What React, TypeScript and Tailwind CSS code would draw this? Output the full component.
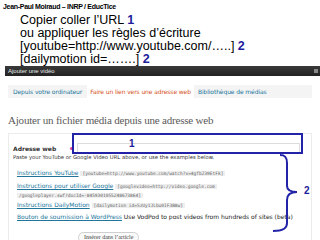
const navy = "text-[#1c1c9c]";

const Brace: React.FC = () => (
  <svg
    className="absolute left-[268px] top-[153px]"
    width="36"
    height="82"
    viewBox="0 0 36 82"
    fill="none"
  >
    <path
      d="M12 2 C17 2 19 4 19 10 L19 33 C19 37 22 39 29 39 C22 39 19 42 19 47 L19 70 C19 75 16 78 5 78"
      stroke="#2323a8"
      strokeWidth="2"
    />
  </svg>
);

const Code: React.FC<{ children: React.ReactNode }> = ({ children }) => (
  <code className="bg-[#eeeeee] px-[2px] font-['DejaVu_Sans_Mono',monospace] text-[4.5px] leading-none text-[#666]">
    {children}
  </code>
);

const LinkText: React.FC<{ children: React.ReactNode }> = ({ children }) => (
  <span className="text-[#21759b] underline">{children}</span>
);

export default function App() {
  return (
    <div className="relative w-[320px] h-[240px] overflow-hidden bg-white font-['Liberation_Sans',Arial,sans-serif]">
      {/* slide header */}
      <div className="pl-[3px] pt-[3px] h-[14px] text-[7px] leading-[8px] font-bold tracking-[-0.3px] text-black font-['Liberation_Sans_Narrow','Liberation_Sans',sans-serif]">
        Jean-Paul Moiraud – INRP / EducTice
      </div>
      <div className="pl-[20px] text-[12.5px] leading-[13px] text-black">
        <div>
          Copier coller l’URL <span className={`font-bold ${navy}`}>1</span>
        </div>
        <div>ou appliquer les règles d’écriture</div>
        <div>
          [youtube=http://www.youtube.com/…..]{" "}
          <span className={`font-bold ${navy}`}>2</span>
        </div>
        <div>
          [dailymotion id=…….]{" "}
          <span className={`font-bold ${navy}`}>2</span>
        </div>
      </div>

      {/* dialog title bar */}
      <div className="ml-[5px] h-[10px] bg-gradient-to-b from-[#3a3a3a] to-[#222] flex items-center justify-between pl-[3px] pr-[2px]">
        <span className="text-[6px] text-[#e8e8e8] leading-none">Ajouter une vidéo</span>
        <span className="w-[4px] h-[4px] bg-[#888]" />
      </div>

      {/* tabs */}
      <div className="mx-[8px] mt-[9px] h-[13px] bg-[#f4f4f4] flex items-stretch text-[6px] font-['DejaVu_Sans',sans-serif] tracking-[-0.1px]">
        <div className="px-[5px] flex items-center text-[#21759b]">Depuis votre ordinateur</div>
        <div className="px-[3px] flex items-center bg-white text-[#d54e21]">Faire un lien vers une adresse web</div>
        <div className="px-[4px] flex items-center text-[#21759b]">Bibliothèque de médias</div>
      </div>

      {/* heading */}
      <div className="pl-[8px] mt-[15px] h-[14px] text-[11px] leading-[14px] tracking-[-0.2px] text-[#5a5a5a] font-['Liberation_Serif',Georgia,serif]">
        Ajouter un fichier média depuis une adresse web
      </div>

      {/* card */}
      <div className="ml-[8px] mt-[6px] w-[304px] h-[120px] border border-[#ececec] pt-[10px] font-['DejaVu_Sans',sans-serif]">
        <div className="flex items-center pl-[4px] h-[9px]">
          <span className="text-[6px] font-bold text-[#333] w-[57px]">Adresse web</span>
          <span className="w-[3px] h-[3px] rounded-full bg-[#e0409a]" />
          <div className="ml-[4px] w-[223px] h-[11px] border border-[#dcdcdc] bg-white" />
        </div>
        <div className="pl-[4px] mt-[1px] h-[7px] text-[5.3px] leading-[7px] text-[#333]">
          Paste your YouTube or Google Video URL above, or use the examples below.
        </div>
        <div className="pl-[8px] mt-[8px] flex flex-col text-[6px] leading-[8px]">
          <div className="h-[8px] whitespace-nowrap">
            <LinkText>Instructions YouTube</LinkText>{" "}
            <Code>[youtube=http://www.youtube.com/watch?v=4gfbZ39EtFk]</Code>
          </div>
          <div className="mt-[4px] h-[18px] leading-[9px] whitespace-nowrap">
            <LinkText>Instructions pour utiliser Google</LinkText>{" "}
            <Code>[googlevideo=http://video.google.com</Code>
            <br />
            <Code>/googleplayer.swf?docId=-8459301055248673864]</Code>
          </div>
          <div className="mt-[2px] h-[8px] whitespace-nowrap">
            <LinkText>Instructions DailyMotion</LinkText>{" "}
            <Code>[dailymotion id=5zUy1JLbu0IF3B8w]</Code>
          </div>
          <div className="mt-[4px] h-[8px] whitespace-nowrap text-[#222]">
            <LinkText>Bouton de soumission à WordPress</LinkText> Use VodPod to post videos from hundreds of sites (beta)
          </div>
        </div>
        <div className="pl-[69px] mt-[1px]">
          <button className="h-[11px] px-[5px] rounded-[6px] border border-[#cfcfcf] bg-[#fafafa] text-[6px] leading-none text-[#444] font-['Liberation_Serif',serif]">
            Insérer dans l’article
          </button>
        </div>
      </div>

      {/* annotations */}
      <div className="absolute left-[72px] top-[133px] w-[231px] h-[21px] border-2 border-[#2323a8]" />
      <span className={`absolute left-[129px] top-[139px] text-[10px] leading-[10px] font-bold ${navy}`}>1</span>
      <Brace />
      <span className={`absolute left-[304px] top-[186px] text-[10px] leading-[10px] font-bold ${navy}`}>2</span>
    </div>
  );
}
